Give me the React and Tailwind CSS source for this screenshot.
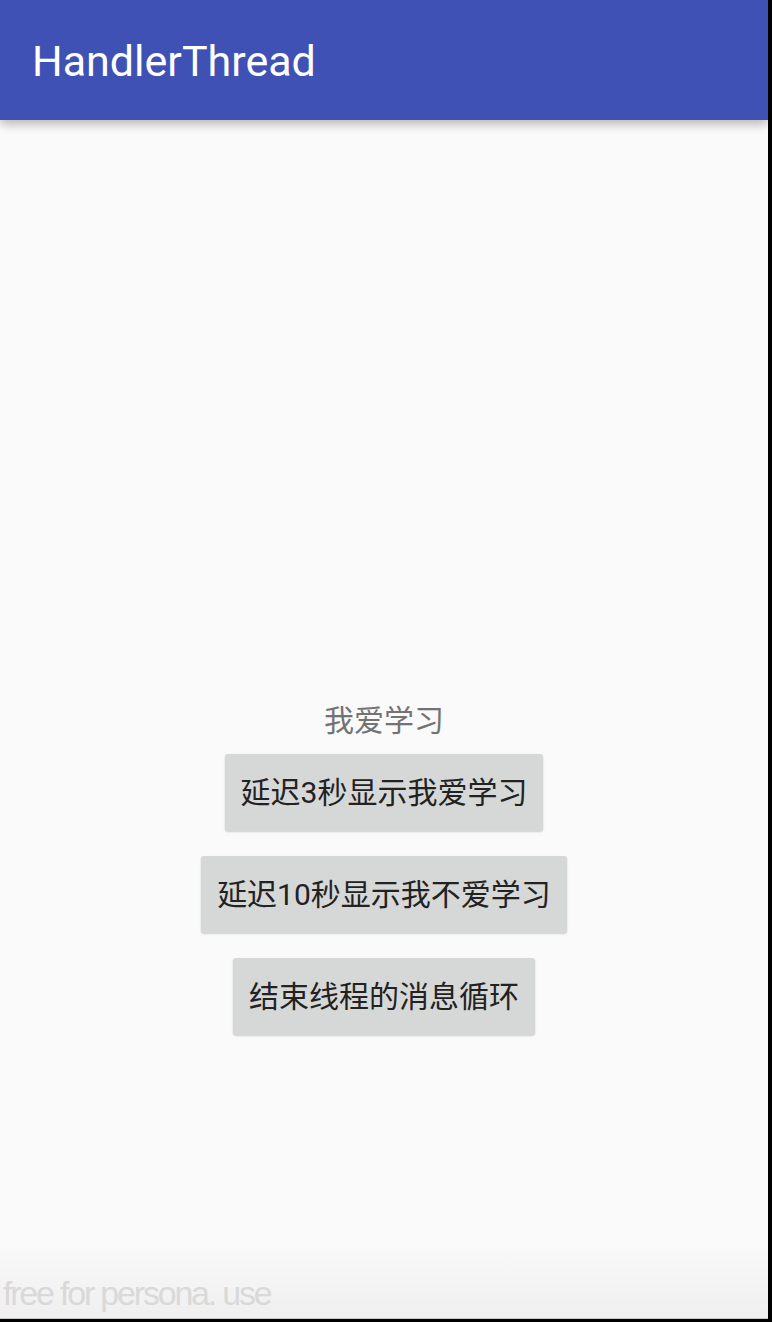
import React from 'react';

const cjk = { fontFamily: 'Roboto, "Noto Sans CJK SC", sans-serif' };

function GreyButton({ children }) {
  return (
    <button
      className="bg-[#d6d7d7] text-[#222] text-[30px] leading-none h-[77px] px-[16px] rounded-[3px] shadow-[0_1px_2px_rgba(0,0,0,0.18)]"
      style={cjk}
    >
      {children}
    </button>
  );
}

export default function App() {
  return (
    <div className="w-[772px] h-[1322px] flex bg-black overflow-hidden">
      <div className="w-[768px] h-[1319px] flex flex-col bg-[#fafafa]">
        <header className="h-[120px] shrink-0 bg-[#3f51b5] flex items-center px-[32px] pt-[3px] shadow-[0_4px_10px_rgba(0,0,0,0.28)] relative z-10">
          <h1 className="text-white text-[43px] leading-none" style={{ fontFamily: 'Roboto, sans-serif' }}>
            HandlerThread
          </h1>
        </header>

        <main className="flex-1 flex flex-col items-center pt-[586px]">
          <p className="text-[#737373] text-[30px] leading-none" style={cjk}>
            我爱学习
          </p>
          <div className="flex flex-col items-center gap-[25px] mt-[18px]">
            <GreyButton>延迟3秒显示我爱学习</GreyButton>
            <GreyButton>延迟10秒显示我不爱学习</GreyButton>
            <GreyButton>结束线程的消息循环</GreyButton>
          </div>
        </main>

        <footer className="h-[80px] shrink-0 flex items-end bg-gradient-to-b from-[#fafafa] to-[#efefef] pb-[8px] pl-[3px]">
          <span
            className="text-[#d9d9d9] text-[34px] leading-none tracking-[-2.2px] font-light"
            style={{ fontFamily: '"Liberation Sans", sans-serif' }}
          >
            free for persona. use
          </span>
        </footer>
        <div className="h-px bg-[#c9c9c9]" />
      </div>
    </div>
  );
}
